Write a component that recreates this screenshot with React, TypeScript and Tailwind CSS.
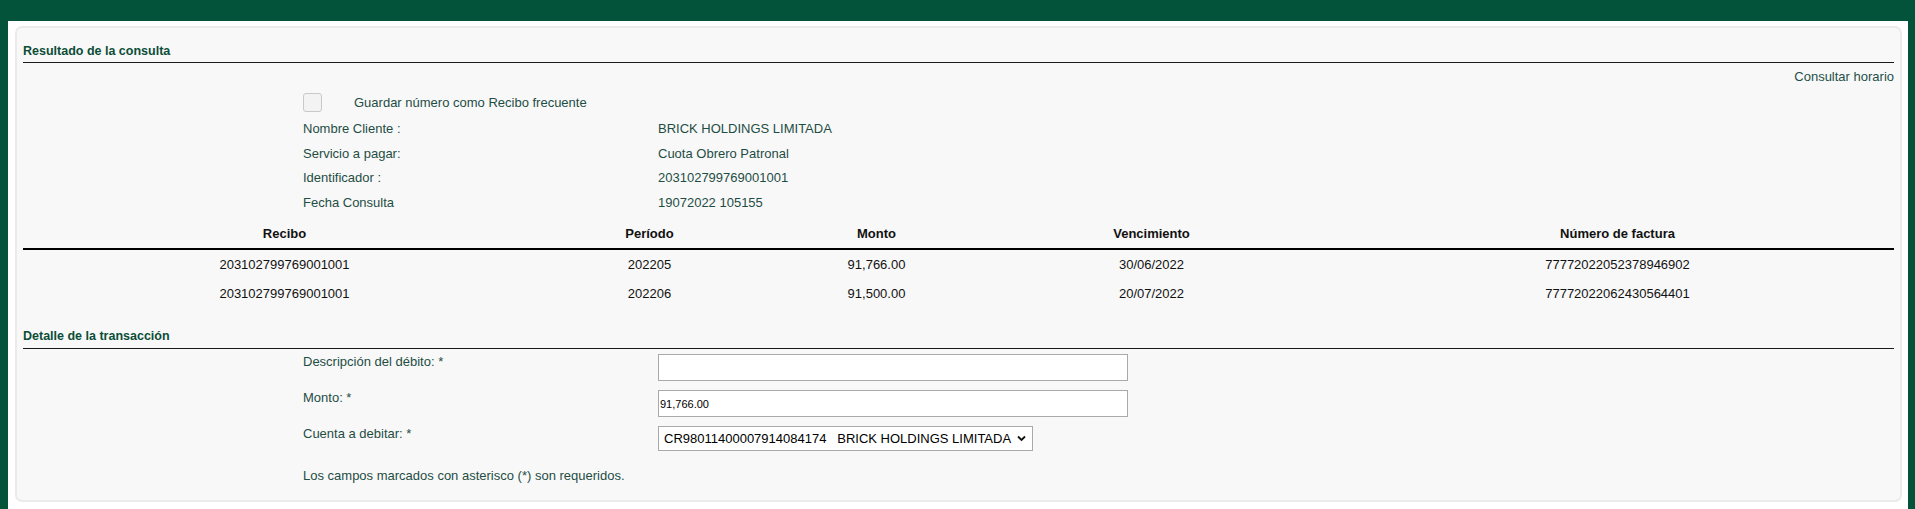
import React from "react";

const rows = [
  ["203102799769001001", "202205", "91,766.00", "30/06/2022", "77772022052378946902"],
  ["203102799769001001", "202206", "91,500.00", "20/07/2022", "77772022062430564401"],
];

const info = [
  ["Nombre Cliente :", "BRICK HOLDINGS LIMITADA"],
  ["Servicio a pagar:", "Cuota Obrero Patronal"],
  ["Identificador :", "203102799769001001"],
  ["Fecha Consulta", "19072022 105155"],
];

export default function App() {
  return (
    <div className="w-[1915px] h-[509px] bg-[#03533a] pt-[21px] pl-[8px] pr-[7px] font-['Liberation_Sans',Arial,sans-serif] text-[13px]">
      <div className="h-[488px] bg-white pt-[5px] pl-[7px] pr-[6px]">
        <div className="h-[476px] border-2 border-[#ebebeb] rounded-[7px] bg-[#f8f8f8] px-[6px]">
          {/* Heading */}
          <div className="mt-[15px] pb-[3px] border-b border-[#1a1a1a]">
            <div className="h-[16px] leading-[16px] text-[12.5px] font-bold text-[#0b4d37]">
              Resultado de la consulta
            </div>
          </div>

          <div className="mt-[6px] h-[16px] leading-[16px] text-right text-[#1d5048]">
            Consultar horario
          </div>

          <div className="mt-[8px] h-[19px] flex items-center pl-[280px]">
            <div className="w-[19px] h-[19px] rounded-[3px] border border-[#c9c9c9] bg-[#f3f3f3]" />
            <span className="ml-[32px] leading-[16px] text-[#1e4d44]">
              Guardar número como Recibo frecuente
            </span>
          </div>

          <div className="mt-[5px]">
            {info.map(([l, v]) => (
              <div key={l} className="h-[24.5px] flex items-center pl-[280px] text-[#1e4d44]">
                <div className="w-[355px] leading-[16px]">{l}</div>
                <div className="leading-[16px]">{v}</div>
              </div>
            ))}
          </div>

          <table className="w-full table-fixed border-collapse text-[#111]">
            <colgroup>
              <col className="w-[523px]" />
              <col className="w-[207px]" />
              <col className="w-[247px]" />
              <col className="w-[303px]" />
              <col />
            </colgroup>
            <thead>
              <tr className="border-b-2 border-black">
                <th className="pt-[11px] pb-[6px] leading-[16px] font-bold text-center">Recibo</th>
                <th className="pt-[11px] pb-[6px] leading-[16px] font-bold text-center">Período</th>
                <th className="pt-[11px] pb-[6px] leading-[16px] font-bold text-center">Monto</th>
                <th className="pt-[11px] pb-[6px] leading-[16px] font-bold text-center">Vencimiento</th>
                <th className="pt-[11px] pb-[6px] pl-[38px] leading-[16px] font-bold text-center">Número de factura</th>
              </tr>
            </thead>
            <tbody>
              {rows.map((r, i) => (
                <tr key={i} className="h-[30px]">
                  <td className="p-0 text-center align-middle leading-[16px]">{r[0]}</td>
                  <td className="p-0 text-center align-middle leading-[16px]">{r[1]}</td>
                  <td className="p-0 text-center align-middle leading-[16px]">{r[2]}</td>
                  <td className="p-0 text-center align-middle leading-[16px]">{r[3]}</td>
                  <td className="p-0 pl-[38px] text-center align-middle leading-[16px]">{r[4]}</td>
                </tr>
              ))}
            </tbody>
          </table>

          <div className="mt-[19px] pb-[4px] border-b border-[#1a1a1a]">
            <div className="h-[16px] leading-[16px] text-[12.5px] font-bold text-[#0b4d37]">
              Detalle de la transacción
            </div>
          </div>

          <div className="mt-[5px] flex items-start pl-[280px] text-[#1e4d44]">
            <div className="w-[355px] leading-[16px]">Descripción del débito: *</div>
            <input
              type="text"
              className="w-[470px] h-[27px] bg-white border border-[#a9a9a9] px-[1px] text-[11px] text-black outline-none"
              defaultValue=""
            />
          </div>

          <div className="mt-[9px] flex items-start pl-[280px] text-[#1e4d44]">
            <div className="w-[355px] leading-[16px]">Monto: *</div>
            <input
              type="text"
              className="w-[470px] h-[27px] bg-white border border-[#a9a9a9] px-[1px] text-[11px] text-black outline-none"
              defaultValue="91,766.00"
            />
          </div>

          <div className="mt-[9px] flex items-start pl-[280px] text-[#1e4d44]">
            <div className="w-[355px] leading-[16px]">Cuenta a debitar: *</div>
            <div className="relative w-[375px] h-[25px]">
              <select
                className="appearance-none w-full h-full bg-white border border-[#a9a9a9] pl-[5px] pr-[20px] text-[13px] text-black outline-none"
                defaultValue="a"
              >
                <option value="a">{"CR98011400007914084174\u00A0\u00A0\u00A0BRICK HOLDINGS LIMITADA"}</option>
              </select>
              <svg
                className="absolute right-[7px] top-[9px] pointer-events-none"
                width="9"
                height="7"
                viewBox="0 0 9 7"
              >
                <path d="M1 1.5 L4.5 5 L8 1.5" fill="none" stroke="#111" strokeWidth="1.8" />
              </svg>
            </div>
          </div>

          <div className="mt-[17px] pl-[280px] leading-[16px] text-[#1e4d44]">
            Los campos marcados con asterisco (*) son requeridos.
          </div>
        </div>
      </div>
    </div>
  );
}
